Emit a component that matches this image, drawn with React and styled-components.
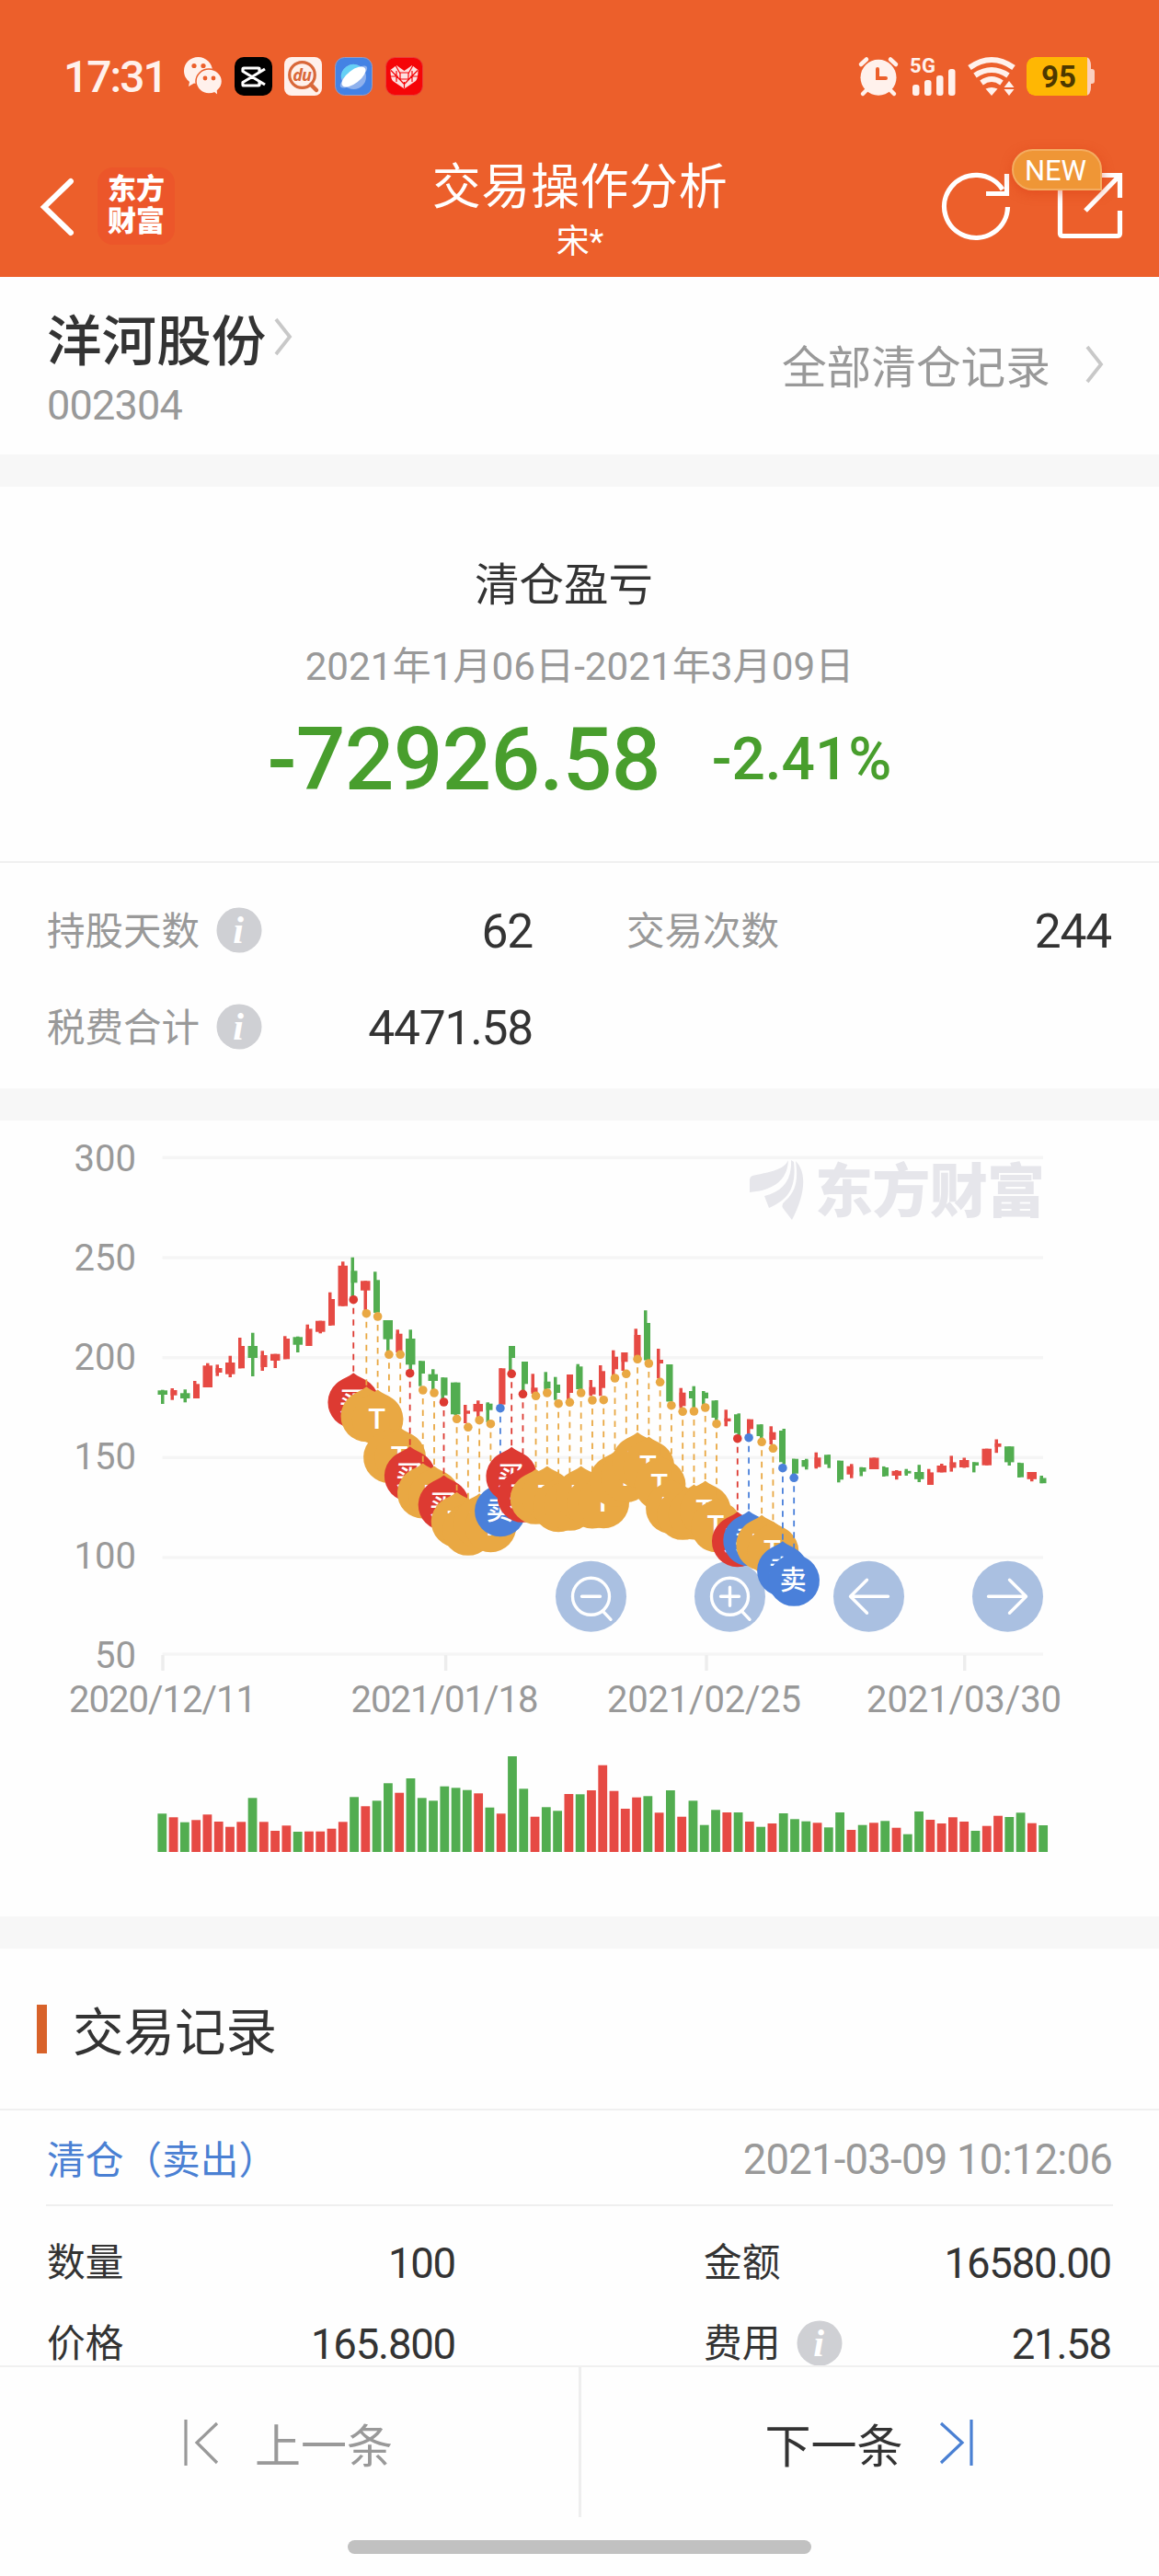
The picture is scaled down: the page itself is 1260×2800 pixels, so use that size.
import React from "react";
import styled, { createGlobalStyle } from "styled-components";

const RED = "#e64a44";
const GREEN = "#52ad50";

// one trading day: colour, body shape, high, low, body top, body bottom, volume
// shape: w = wide body, l = wick on the left edge, r = wick on the right edge
const days = [
   ["g", "w", 292.7, 308, 293.3, 298, 41.7],
   ["r", "l", 291, 303.7, 293, 298.7, 37.7],
   ["g", "w", 292.3, 306.3, 296.3, 302, 32.3],
   ["r", "l", 283, 302, 286.3, 302, 34.7],
   ["r", "w", 263.7, 290, 266.3, 290, 40.7],
   ["r", "l", 265.3, 277.7, 269, 274, 33],
   ["r", "w", 255.7, 279, 263, 275.7, 27.3],
   ["r", "l", 236, 269.3, 245, 269.3, 32.7],
   ["g", "w", 230.7, 278, 245, 258, 58.7],
   ["r", "l", 250.3, 272, 255, 268, 32.7],
   ["r", "w", 253.7, 269, 253.7, 261, 23],
   ["r", "l", 234.3, 259.3, 237, 259.3, 28.7],
   ["g", "w", 234.7, 252, 235.3, 243.7, 22],
   ["r", "l", 221.7, 245, 226.3, 245, 22.3],
   ["r", "w", 217.7, 231.3, 217.7, 229.7, 22.3],
   ["r", "l", 186.7, 223, 194, 222.7, 25.3],
   ["r", "w", 153.3, 201.7, 157.7, 201.7, 32.7],
   ["g", "l", 148.7, 193.7, 163.3, 176.3, 59.7],
   ["r", "w", 174.3, 208.7, 174.3, 184.7, 49.7],
   ["g", "l", 164.3, 208.7, 173.3, 208.7, 55.7],
   ["g", "w", 217, 252, 217, 237.7, 74.7],
   ["r", "l", 227.3, 252, 231.7, 252, 64.3],
   ["g", "w", 227.3, 272, 237, 265.3, 80],
   ["g", "l", 261.3, 288.7, 261.3, 275, 58.7],
   ["g", "w", 270.3, 293.7, 275.7, 283, 55.7],
   ["g", "l", 279.3, 303.7, 279.3, 298.7, 71.3],
   ["g", "w", 284.7, 320.3, 284.7, 319.3, 69.7],
   ["g", "l", 309, 329, 315.3, 318.7, 67.3, "r"],
   ["r", "w", 304.3, 323.7, 308, 316.3, 63.7],
   ["g", "l", 306.3, 328, 307.7, 314.7, 48.3],
   ["r", "l", 269.3, 308.7, 269.3, 308.7, 41.7],
   ["g", "l", 245, 272, 245, 258, 104],
   ["g", "l", 262, 295.3, 262, 286.3, 68.7],
   ["r", "l", 275.3, 297, 290.3, 295.3, 38.3],
   ["g", "l", 273.3, 293.7, 283.7, 291.3, 48.7],
   ["g", "l", 278.7, 303.7, 287, 296, 44.7],
   ["r", "l", 276, 303.7, 276, 296, 63],
   ["g", "l", 264.7, 292, 267.3, 292, 62.7],
   ["r", "l", 282, 299.3, 289.7, 297.7, 67],
   ["r", "l", 266, 299.3, 272.3, 290.7, 94.3],
   ["r", "l", 249.7, 277, 256.7, 270.3, 66.3],
   ["r", "l", 252, 272, 252, 262.3, 47],
   ["r", "l", 226.3, 257, 233, 257, 59.3],
   ["g", "l", 206.3, 260.3, 220, 260.3, 60.7],
   ["r", "l", 248, 280.3, 260, 264, 42.7],
   ["g", "l", 265, 305.3, 265, 305.3, 67],
   ["r", "l", 290.7, 312.7, 295.7, 310.3, 38.3],
   ["g", "r", 288.7, 312, 294, 302, 55.7],
   ["g", "l", 294, 308.7, 295.7, 302, 29.3],
   ["g", "r", 304, 326, 304.3, 323, 45.7],
   ["r", "l", 314.3, 332.3, 323.7, 327, 43],
   ["g", "r", 318.3, 342, 319.3, 339.7, 43],
   ["r", "l", 324.7, 342, 324.7, 335.3, 33],
   ["g", "r", 330.3, 345.3, 330.3, 343, 27.3],
   ["r", "l", 332.3, 352, 338.7, 347, 31],
   ["g", "r", 335, 373.7, 337, 371.3, 42],
   ["g", "l", 367.7, 384.7, 367.7, 383.7, 35.7],
   ["g", "r", 367.7, 379.3, 369, 376.3, 33.3],
   ["r", "l", 360.7, 378.3, 366.3, 376.7, 31.7],
   ["g", "r", 363.3, 377.7, 363.3, 373.7, 26.7],
   ["g", "l", 369.7, 393.3, 369.7, 390.3, 43],
   ["r", "r", 373.3, 388.7, 375.7, 384.7, 24],
   ["g", "l", 376.7, 386.5, 377, 381.6, 29.3],
   ["r", "w", 366.5, 379, 366.5, 379, 31.7],
   ["g", "l", 375.9, 387, 377, 386.5, 33.7],
   ["r", "w", 380, 390.2, 380.8, 386, 26.3],
   ["g", "l", 378.7, 386, 380.8, 383.6, 19.3],
   ["g", "w", 374.2, 393, 382, 389.8, 44],
   ["r", "l", 378.7, 396, 382.4, 396, 35],
   ["r", "w", 373, 382.4, 375, 382.4, 31],
   ["r", "l", 364.4, 381.6, 371.4, 377.5, 37.7],
   ["r", "w", 366.5, 377.5, 369, 377, 33],
   ["g", "l", 371.4, 382.4, 371.4, 375, 23],
   ["r", "w", 356.7, 374.7, 356.7, 374.7, 28.3],
   ["r", "l", 346.5, 361.2, 351, 354.7, 39.3],
   ["g", "w", 354.2, 375, 354.2, 371.4, 38],
   ["g", "l", 371.8, 388, 372.2, 387.7, 42.7],
   ["r", "w", 382, 392.2, 382, 389.8, 31.3],
   ["g", "l", 386, 394.2, 388.5, 394.2, 29],
];

// day index, trade type, dot height
const trades = [
   [17, "buy", 194.7], [18, "t", 209.7], [19, "t", 213], [20, "t", 254.3],
   [21, "t", 254.3], [22, "buy", 274.7], [23, "t", 293], [24, "t", 296],
   [25, "buy", 306], [26, "t", 324.3], [27, "t", 333.3], [28, "t", 325.7],
   [29, "t", 329.7], [30, "sell", 312.7], [31, "buy", 275.3], [32, "buy", 297.3],
   [33, "t", 299.3], [34, "t", 296], [35, "t", 307.7], [36, "t", 306.3],
   [37, "t", 296], [38, "t", 304], [39, "t", 303.7], [40, "t", 280],
   [41, "t", 275.3], [42, "t", 259.3], [43, "t", 264], [44, "t", 284.3],
   [45, "t", 309.7], [46, "t", 316.3], [47, "t", 316], [48, "t", 312],
   [49, "t", 329.7], [51, "buy", 345.7], [52, "sell", 344.7], [53, "t", 349.3],
   [54, "t", 356.3], [55, "sell", 377.7], [56, "sell", 388.3],
];

const pinTypes = {
   buy: { color: "#dd3a32", label: "买", dx: -1.2 },
   sell: { color: "#4a80da", label: "卖", dx: -1.2 },
   t: { color: "#e9a843", label: "T", dx: 0.6 },
};

const priceAxis = [
   [300, 40.3], [250, 149], [200, 257.7], [150, 366.3], [100, 475], [50, 580],
];

const dateAxis = [
   ["2020/12/11", 177, 75, 204],
   ["2021/01/18", 484.6, 381.5, 204],
   ["2021/02/25", 768, 660, 211],
   ["2021/03/30", 1048.7, 942, 212],
];

const UNIT = 3.5;
const snap = (v) => Math.round(v / UNIT) * UNIT;
const dayX = (i) => 176.7 + i * 12.28;

const Candle = ({ day, i }) => {
   const [dir, shape, high, low, top, bottom] = day;
   const left = snap(dayX(i) - (shape === "l" ? 3.6 : 5.3));
   const fill = (day[7] || dir) === "r" ? RED : GREEN;
   return (
      <g fill={fill}>
         <rect x={shape === "l" ? left : left + UNIT} y={high} width={UNIT} height={low - high} />
         <rect x={left} y={top} width={shape === "w" ? UNIT * 3 : UNIT * 2} height={bottom - top} />
      </g>
   );
};

const TradePin = ({ index, type, y }) => {
   const { color, label, dx } = pinTypes[type];
   return (
      <g transform={`translate(${dayX(index) + dx} ${y})`} fill={color}>
         <circle r="4.8" />
         <path d="M0 9V80" stroke={color} strokeWidth="1.8" strokeDasharray="6.5 6" />
         <path d="M0 79.5C5 84 13 86 18.500 91A27.800 27.800 0 1 1 -18.500 91C-13 86 -5 84 0 79.5Z" />
         <PinLabel x="-1" y="121.5" $t={type === "t"}>{label}</PinLabel>
      </g>
   );
};

const ChartButton = ({ x, children }) => (
   <g transform={`translate(${x} 517.3)`}>
      <circle r="38.5" fill="#aac0e1" />
      <g fill="none" stroke="#fff" strokeWidth="3.4" strokeLinecap="round" strokeLinejoin="round">
         {children}
      </g>
   </g>
);

const Chart = () => (
   <ChartSvg viewBox="0 0 1260 865">
      {priceAxis.map(([price, y], i) => (
         <g key={price}>
            <rect x="176.5" y={y - 1.7} width="957.5" height="3.4" fill="#f5f5f5" />
            <AxisText x="148" y={54.5 + i * 108} textAnchor="end">{price}</AxisText>
         </g>
      ))}
      {dateAxis.map(([date, tick, x, width]) => (
         <g key={date}>
            <rect x={tick - 1.7} y="581" width="3.4" height="17" fill="#ededed" />
            <AxisText x={x} y="643" textLength={width}>{date}</AxisText>
         </g>
      ))}

      <g fill="#e6e6eb">
         <path d="M857 43C852 54 836 56 818 60Q815 61 815 65V78C838 76 856 67 857 43Z" />
         <path d="M860 43C861 65 851 77 831 82L836 95C856 86 866 75 863 45Z" />
         <path d="M865 44C877 56 876 79 861 108L851 95Q849 91 854 87C865 77 868 65 865 44Z" />
         <Watermark x="886" y="99" textLength="250">东方财富</Watermark>
      </g>

      {days.map((day, i) => <Candle key={i} day={day} i={i} />)}

      <ChartButton x={642.5}>
         <circle r="20" />
         <path d="M-10 0H10M13 16L21.5 25" />
      </ChartButton>
      <ChartButton x={793.5}>
         <circle r="20" />
         <path d="M-10 0H10M0 -10V10M13 16L21.5 25" />
      </ChartButton>
      <ChartButton x={944.5}>
         <path d="M21 0H-20M-2 -18L-20 0L-2 18" />
      </ChartButton>
      <ChartButton x={1095.5}>
         <path d="M-21 0H20M2 -18L20 0L2 18" />
      </ChartButton>

      {trades.map(([index, type, y]) => (
         <TradePin key={index} index={index} type={type} y={y} />
      ))}

      {days.map((day, i) => (
         <rect
            key={i}
            x={dayX(i) - 5.3}
            y={795 - day[6]}
            width="9.8"
            height={day[6]}
            fill={day[0] === "r" ? RED : GREEN}
         />
      ))}
   </ChartSvg>
);

const Chevron = () => (
   <svg width="20" height="42" viewBox="0 0 20 42" fill="none" stroke="#c8c8c8" strokeWidth="3.8">
      <path d="M2 2L17 21L2 40" />
   </svg>
);

const Info = () => (
   <InfoDot viewBox="0 0 50 50">
      <circle cx="25" cy="25" r="24.5" fill="#cfd0d4" />
      <text x="24" y="39" textAnchor="middle">i</text>
   </InfoDot>
);

const StatusBar = () => (
   <Status>
      <Clock>17:31</Clock>
      <AppIcons>
         <svg width="41" height="42" viewBox="0 0 41 42" fill="#fff1ec">
            <path d="M15.500 0C7 0 0 6.500 0 15c0 5.500 2.500 9 6 12l-1 5 6-3.500c1.500.5 3 .5 4.500.5C24 29 31 23 31 15S24 0 15.500 0Z" />
            <path d="M27 13c-7.500 0-14 6-14 13.500s6.500 13.500 14 13.500c2 0 4 0 6-1l4 3-.5-5.500c3-2.500 5-6 5-10C41.500 19 35 13 27 13Z" stroke="#ec5f2b" strokeWidth="1.5" />
            <g fill="#ec5f2b">
               <circle cx="11" cy="9.5" r="2.6" />
               <circle cx="21" cy="9.5" r="2.6" />
               <circle cx="23" cy="23" r="2.4" />
               <circle cx="32" cy="23" r="2.4" />
            </g>
         </svg>
         <svg width="41" height="42" viewBox="0 0 41 42">
            <rect width="41" height="42" rx="10" fill="#000" />
            <path d="M27 16V12.500Q27 12 26 12H10Q9 12 9 13V15.500L33 30M27 27V30.500Q27 31 26 31H10Q9 31 9 30V27.500L33 13" fill="none" stroke="#fff" strokeWidth="3.2" strokeLinejoin="round" />
         </svg>
         <svg width="41" height="42" viewBox="0 0 41 42">
            <rect width="41" height="42" rx="8" fill="#fff1ec" />
            <circle cx="19.5" cy="19.5" r="13.8" fill="none" stroke="#d9683a" strokeWidth="3.2" />
            <path d="M29 30L35 36" stroke="#d9683a" strokeWidth="4.5" strokeLinecap="round" />
            <DuText x="19" y="25.5" textAnchor="middle">du</DuText>
         </svg>
         <svg width="41" height="42" viewBox="0 0 41 42">
            <rect x=".5" y=".5" width="40" height="41" rx="10" fill="#4482e4" stroke="#9a9cc0" />
            <ellipse cx="20.5" cy="21.5" rx="18" ry="6" fill="#8fb1ed" transform="rotate(-38 20.5 21.5)" />
            <circle cx="20.5" cy="21.5" r="13.5" fill="#8fb1ed" />
            <path d="M7 24A13.500 13.500 0 0 1 28 10.500Z" fill="#65d0f5" />
            <ellipse cx="20.5" cy="21.5" rx="15.5" ry="7" fill="#fff" transform="rotate(-38 20.5 21.5)" />
         </svg>
         <svg width="41" height="42" viewBox="0 0 41 42">
            <rect x=".5" y=".5" width="40" height="41" rx="10" fill="#f50508" stroke="#e8413a" />
            <path d="M20.500 34.500L8 26Q5.500 23 5.500 14L12 9L20.500 15L29 9L35.500 14Q35.500 23 33 26Z" fill="#fde0e0" />
            <path d="M6 14.500L20 29M11 9L16 18M30 9L25 18M35 14.500L21 29M16 17H25V24H16ZM6 21H14M27 21H35M20.500 27V34M12 15V27M29 15V27" fill="none" stroke="#f50508" strokeWidth="1.2" />
         </svg>
      </AppIcons>
      <SystemIcons>
         <svg width="44" height="42" viewBox="0 0 44 42" fill="#fff1ec">
            <circle cx="22" cy="22.3" r="19.5" />
            <path d="M3 8L9 2.500M41 8L35 2.500M5 40L9 36M39 40L35 36" stroke="#fff1ec" strokeWidth="4.5" strokeLinecap="round" />
            <path d="M21 13V23H30" fill="none" stroke="#ec5f2b" strokeWidth="4" strokeLinecap="round" />
         </svg>
         <svg width="51" height="42" viewBox="0 0 51 42" fill="#fff1ec">
            <NetText x="0" y="16.5" textLength="28">5G</NetText>
            <rect x="3" y="30" width="7.5" height="12" rx="3" />
            <rect x="16" y="25" width="7.5" height="17" rx="3" />
            <rect x="29" y="20" width="7.5" height="22" rx="3" />
            <rect x="42" y="13" width="7.5" height="29" rx="3" />
         </svg>
         <svg width="52" height="42" viewBox="0 0 52 42" fill="#fff1ec">
            <g fill="none" stroke="#fff1ec" strokeWidth="6">
               <path d="M2 11.500Q26 -5.500 50 11.500" />
               <path d="M8 20Q26 8 44 20" />
               <path d="M15 28Q26 20 37 28" />
            </g>
            <path d="M19.500 34.500Q26 31.500 32.500 34.500L26 42Z" />
            <path d="M39.500 33L45 26L50.500 33ZM39.500 35H50.500L45 42Z" />
         </svg>
         <Battery>95</Battery>
      </SystemIcons>
   </Status>
);

const App = () => (
   <Page>
      <GlobalStyle />
      <Header>
         <StatusBar />
         <NavBar>
            <NavSide>
               <svg width="36" height="64" viewBox="0 0 36 64" fill="none" stroke="#fff" strokeWidth="6" strokeLinecap="round">
                  <path d="M33 5L4 33L33 61" />
               </svg>
               <Brand>东方<br />财富</Brand>
            </NavSide>
            <NavTitle>
               <h1>交易操作分析</h1>
               <p>宋*</p>
            </NavTitle>
            <NavSide $end>
               <svg width="75" height="74" viewBox="0 0 75 74" fill="none" stroke="#fff" strokeWidth="5.2">
                  <path d="M71.500 38A34.500 34 0 1 1 66 19" />
                  <path d="M70.500 2V23.500H48" />
               </svg>
               <ShareIcon>
                  <svg width="70" height="72" viewBox="0 0 70 72" fill="none" stroke="#fff" strokeWidth="5.2">
                     <path d="M30 2.500H67.500V27M67.500 41V65.500Q67.500 68.500 64.500 68.500H5.500Q2.500 68.500 2.500 65.500V2.500H15M30 41L67 3" />
                  </svg>
                  <NewBadge>NEW</NewBadge>
               </ShareIcon>
            </NavSide>
         </NavBar>
      </Header>

      <Stock>
         <div>
            <StockName>洋河股份 <Chevron /></StockName>
            <StockCode>002304</StockCode>
         </div>
         <AllRecords>全部清仓记录 <Chevron /></AllRecords>
      </Stock>

      <Gap />

      <Summary>
         <h2>清仓盈亏</h2>
         <Period>2021年1月06日-2021年3月09日</Period>
         <Profit>
            <strong>-72926.58</strong>
            <span>-2.41%</span>
         </Profit>
      </Summary>
      <Metrics>
         <Metric>
            <label>持股天数</label><Info /><b>62</b>
         </Metric>
         <Metric>
            <label>交易次数</label><b>244</b>
         </Metric>
         <Metric>
            <label>税费合计</label><Info /><b>4471.58</b>
         </Metric>
      </Metrics>

      <Gap />
      <Chart />
      <Gap />

      <RecordsTitle>交易记录</RecordsTitle>
      <Record>
         <RecordHead>
            <span>清仓（卖出）</span>
            <time>2021-03-09 10:12:06</time>
         </RecordHead>
         <RecordGrid>
            <Field><label>数量</label><b>100</b></Field>
            <Field><label>金额</label><b>16580.00</b></Field>
            <Field><label>价格</label><b>165.800</b></Field>
            <Field><label>费用</label><Info /><b>21.58</b></Field>
         </RecordGrid>
      </Record>

      <Pager>
         <PageButton $disabled>
            <svg width="38" height="50" viewBox="0 0 38 50" fill="none" stroke="#999" strokeWidth="3.2">
               <path d="M2 0V50M36 4L14 25L36 47" />
            </svg>
            上一条
         </PageButton>
         <PageButton>
            下一条
            <svg width="38" height="50" viewBox="0 0 38 50" fill="none" stroke="#4a80d3" strokeWidth="3.2">
               <path d="M35 0V50M2 4L25 25L2 47" />
            </svg>
         </PageButton>
      </Pager>
      <HomeBar />
   </Page>
);

const GlobalStyle = createGlobalStyle`
   * {
      box-sizing: border-box;
      margin: 0;
      padding: 0;
   }
   body {
      background: #fefefe;
      color: #333;
      font-family: Roboto, "Noto Sans CJK SC", sans-serif;
   }
   svg {
      display: block;
      flex-shrink: 0;
      overflow: visible;
   }
`;

const Page = styled.div`
   display: flex;
   flex-direction: column;
   width: 1260px;
   height: 2800px;
   overflow: hidden;
   background: #fefefe;
`;

const Header = styled.header`
   flex: none;
   height: 301px;
   color: #fff;
   background: #ec5f2b;
`;

const Status = styled.div`
   display: flex;
   align-items: center;
   height: 166px;
   padding: 0 70px 0 69px;
`;

const Clock = styled.span`
   width: 131px;
   font-size: 48px;
   font-weight: 500;
   letter-spacing: -2px;
   color: #fff1ec;
`;

const AppIcons = styled.div`
   display: flex;
   gap: 13.7px;
`;

const SystemIcons = styled.div`
   display: flex;
   align-items: center;
   gap: 12px;
   margin-left: auto;
`;

const Battery = styled.div`
   position: relative;
   width: 74px;
   height: 42px;
   border-right: 4px solid transparent;
   border-radius: 9px;
   background: linear-gradient(90deg, #ffb703 66px, #fad0c0 66px) padding-box;
   font-size: 33px;
   font-weight: 700;
   line-height: 43px;
   text-align: center;
   color: #4d3800;

   &::after {
      content: "";
      position: absolute;
      right: -4px;
      top: 13px;
      width: 4px;
      height: 16px;
      border-radius: 0 3px 3px 0;
      background: #fad0c0;
   }
`;

const DuText = styled.text`
   font: italic 700 18px "Open Sans", sans-serif;
   letter-spacing: -1px;
   fill: #d9683a;
`;

const NetText = styled.text`
   font: 700 22px Roboto, sans-serif;
`;

const NavBar = styled.nav`
   display: grid;
   grid-template-columns: 1fr auto 1fr;
   height: 135px;
   padding: 0 40px 0 44px;
`;

const NavSide = styled.div`
   display: flex;
   align-items: center;
   justify-content: ${(props) => (props.$end ? "flex-end" : "flex-start")};
   gap: ${(props) => (props.$end ? "51px" : "26px")};
   height: 115px;
`;

const Brand = styled.div`
   width: 84px;
   height: 84px;
   padding-top: 6px;
   border-radius: 17px;
   background: #ec562a;
   font-size: 31px;
   font-weight: 900;
   line-height: 35px;
   text-align: center;
`;

const NavTitle = styled.div`
   padding-top: 3px;
   margin-left: -3px;
   text-align: center;

   h1 {
      font-size: 53px;
      font-weight: 400;
      letter-spacing: 0.6px;
      line-height: 70px;
   }
   p {
      font-size: 36px;
      line-height: 48px;
   }
`;

const ShareIcon = styled.div`
   position: relative;
`;

const NewBadge = styled.span`
   position: absolute;
   left: -50px;
   top: -26px;
   width: 98px;
   height: 45px;
   border: 2px solid #f4ac60;
   border-radius: 23px 23px 0 23px;
   background: #ef9636;
   box-shadow: 0 3px 12px rgba(220, 60, 20, 0.5);
   font-size: 31px;
   line-height: 43px;
   text-align: center;
   text-indent: -3px;
`;

const Stock = styled.section`
   display: flex;
   flex: none;
   justify-content: space-between;
   height: 193px;
   padding: 0 60px 0 51px;
`;

const StockName = styled.div`
   display: flex;
   align-items: center;
   gap: 9px;
   height: 90px;
   margin-top: 20px;
   font-size: 59.6px;
   font-weight: 500;
`;

const StockCode = styled.div`
   height: 52px;
   margin-top: 4px;
   font-size: 45px;
   line-height: 52px;
   letter-spacing: -0.8px;
   color: #999;
`;

const AllRecords = styled.div`
   display: flex;
   align-items: center;
   gap: 38px;
   height: 190px;
   font-size: 48.7px;
   color: #999;
`;

const Gap = styled.div`
   flex: none;
   height: 35px;
   background: #f7f7f7;
`;

const Summary = styled.section`
   flex: none;
   height: 409px;
   padding-top: 72px;
   border-bottom: 2px solid #f0f0f0;
   text-align: center;

   h2 {
      padding-right: 34px;
      font-size: 48.5px;
      font-weight: 400;
      line-height: 72px;
   }
`;

const Period = styled.p`
   margin-top: 22px;
   font-size: 42.2px;
   line-height: 60px;
   color: #999;
`;

const Profit = styled.div`
   display: flex;
   align-items: center;
   justify-content: center;
   gap: 56px;
   height: 130px;
   margin-top: 5px;
   color: #489e2d;
   font-weight: 500;

   strong {
      font-size: 94.5px;
      font-weight: 500;
      letter-spacing: -0.8px;
   }
   span {
      font-size: 64px;
   }
`;

const Metrics = styled.section`
   display: grid;
   flex: none;
   grid-template-columns: 528px 527px;
   grid-auto-rows: 105px;
   column-gap: 102px;
   height: 245px;
   padding: 20px 51px 0;
`;

const Metric = styled.div`
   display: flex;
   align-items: center;

   label {
      margin: -3px 18px 0 0;
      font-size: 41.5px;
   	color: #999;
   }
   b {
      margin: 3px 0 0 auto;
      font-size: 51.5px;
      font-weight: 400;
      letter-spacing: -1.2px;
   }
`;

const InfoDot = styled.svg`
   width: 50px;
   height: 50px;
   font: italic 700 42px "Liberation Serif", serif;

   text {
      fill: #fff;
   }
`;

const ChartSvg = styled.svg`
   width: 1260px;
   height: 865px;
`;

const AxisText = styled.text`
   font-size: 40px;
   fill: #999;
`;

const Watermark = styled.text`
   font: 900 63px "Noto Sans CJK SC", sans-serif;
`;

const PinLabel = styled.text`
   font-size: ${(props) => (props.$t ? "31px" : "29px")};
   font-weight: 500;
   text-anchor: middle;
   fill: #fff;
`;

const RecordsTitle = styled.h2`
   display: flex;
   flex: none;
   align-items: center;
   height: 176px;
   padding-left: 40px;
   border-bottom: 2px solid #f0f0f0;
   font-size: 55.5px;
   font-weight: 400;

   &::before {
      content: "";
      width: 11px;
      height: 53px;
      margin-right: 28px;
      background: #d8622a;
   }
`;

const Record = styled.section`
   flex: none;
   height: 277px;
   padding: 0 50px;
`;

const RecordHead = styled.div`
   display: flex;
   align-items: center;
   justify-content: space-between;
   height: 104px;
   padding: 0 1px;
   border-bottom: 2px solid #efefef;
   font-size: 41.7px;
   color: #4a80d3;

   time {
      margin-top: 4px;
      font-size: 45.5px;
      letter-spacing: -0.8px;
      color: #999;
   }
`;

const RecordGrid = styled.div`
   display: grid;
   grid-template-columns: 444px 443px;
   grid-auto-rows: 88px;
   column-gap: 270px;
   padding: 19px 1px 0;
`;

const Field = styled.div`
   display: flex;
   align-items: center;
   line-height: 1.1;

   label {
      margin: -3px 18px 0 0;
      font-size: 41.7px;
   }
   b {
      margin: 1px 0 0 auto;
      font-size: 45.5px;
      font-weight: 400;
      letter-spacing: -1.2px;
   }
   svg {
      margin-top: -4px;
   }
`;

const Pager = styled.footer`
   display: grid;
   flex: none;
   grid-template-columns: 632px 1fr;
   height: 165px;
   border-top: 2px solid #f0f0f0;
`;

const PageButton = styled.button`
   display: flex;
   align-items: center;
   justify-content: center;
   gap: 39px;
   border: none;
   border-right: ${(props) => (props.$disabled ? "3px solid #eee" : "none")};
   background: none;
   padding: 0 2px 0 0;
   font-family: inherit;
   font-size: 50px;
   color: ${(props) => (props.$disabled ? "#999" : "#333")};
`;

const HomeBar = styled.div`
   flex: none;
   width: 504px;
   height: 15px;
   margin: 25px auto 0;
   border-radius: 8px;
   background: #c1c1c1;
`;

export default App;
